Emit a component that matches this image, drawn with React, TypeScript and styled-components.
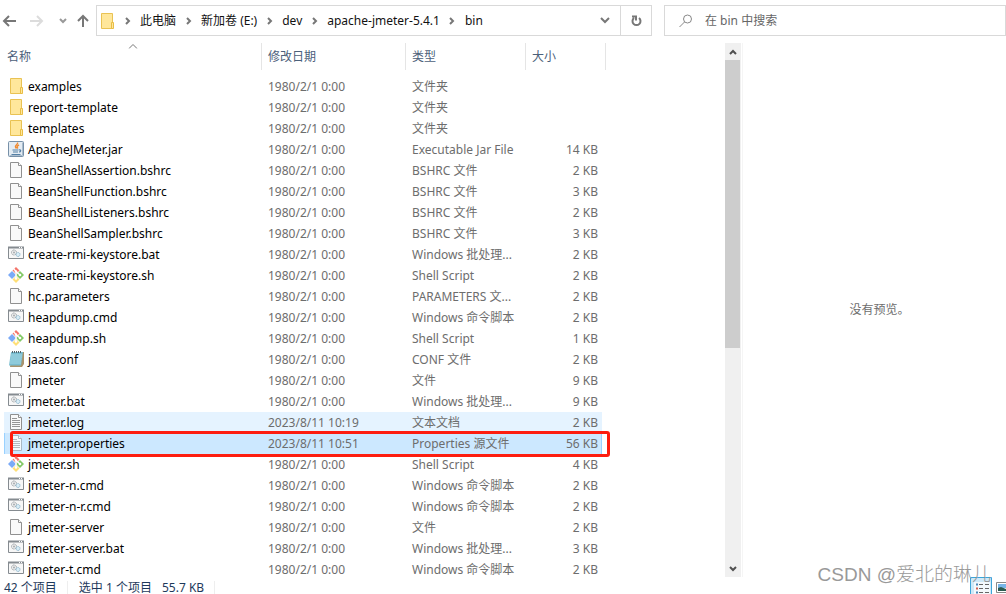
import React from "react";
import styled, { createGlobalStyle, css } from "styled-components";

const Global = createGlobalStyle`
  *, *::before, *::after { box-sizing: border-box; }
  body { margin: 0; background: #fff; }
  body, button, input, table {
    font-family: "Noto Sans", "Noto Sans CJK SC", sans-serif;
    font-size: 12px;
    line-height: 20px;
  }
  svg { display: block; }
`;

const Window = styled.div`
  display: flex;
  flex-direction: column;
  height: 100vh;
  overflow: hidden;
`;

const Toolbar = styled.header`
  display: flex;
  flex: none;
  padding: 5px 0 7px;
`;

const PlainButton = styled.button`
  display: flex;
  align-items: center;
  justify-content: center;
  border: 0;
  padding: 0;
  background: none;
  color: inherit;
`;

const History = styled.nav`
  display: flex;
  flex: none;
  align-items: center;
  width: 96px;
  height: 31px;
`;

const HistoryButton = styled(PlainButton)<{ $width: number }>`
  width: ${(p) => p.$width}px;
  height: 31px;
`;

const Address = styled.nav`
  display: flex;
  flex: 1 1 556px;
  height: 31px;
  border: 1px solid #d9d9d9;
  align-items: center;
  padding-left: 2px;
  min-width: 0;
`;

const Crumb = styled(PlainButton)`
  flex: none;
  color: #111;
`;

const Separator = styled.span`
  display: flex;
  flex: none;
  justify-content: center;
  width: 25px;
`;

const AddressEnd = styled.div`
  display: flex;
  margin-left: auto;
  height: 100%;
`;

const AddressButton = styled(PlainButton)<{ $divided?: boolean }>`
  width: 31px;
  ${(p) => p.$divided && css`border-left: 1px solid #d9d9d9;`}
`;

const Search = styled.label`
  display: flex;
  flex: 1 1 342px;
  align-items: center;
  gap: 12px;
  height: 31px;
  margin-left: 12px;
  padding-left: 14px;
  border: 1px solid #d9d9d9;
  min-width: 0;
`;

const SearchInput = styled.input`
  flex: 1;
  min-width: 0;
  border: 0;
  padding: 0;
  outline: 0;
  color: #666;
  &::placeholder { color: #666; opacity: 1; }
`;

const Content = styled.main`
  display: flex;
  flex: 1;
  min-height: 0;
`;

const ListPane = styled.section`
  flex: 1 1 725px;
  overflow: hidden;
  padding-left: 4px;
`;

const FileTable = styled.table`
  table-layout: fixed;
  width: 602px;
  border-collapse: separate;
  border-spacing: 0;
`;

const HeadCell = styled.th`
  position: relative;
  height: 33px;
  padding: 0 0 6px;
  text-align: left;
  font-weight: 400;
  color: #4c607a;
`;

const HeadLabel = styled.div<{ $first?: boolean }>`
  height: 27px;
  line-height: 27px;
  padding-left: ${(p) => (p.$first ? 3 : 6)}px;
  border-right: 1px solid #e5e5e5;
`;

const SortMark = styled.span`
  position: absolute;
  top: 0;
  left: 50%;
  transform: translateX(-50%);
`;

const Cell = styled.td`
  height: 21px;
  padding: 0 0 0 6px;
  line-height: 20px;
  white-space: nowrap;
  color: #6d6d6d;
`;

const SizeCell = styled(Cell)`
  padding: 0 4px 0 0;
  text-align: right;
`;

const NameCell = styled(Cell)`
  padding: 0 0 0 4px;
  color: #000;
`;

const FileName = styled.div`
  display: flex;
  align-items: flex-start;
  gap: 4px;
  height: 21px;
  line-height: 21px;

  svg { margin-top: 2px; }
`;

const Row = styled.tr<{ $state?: "hover" | "selected" }>`
  position: relative;
  ${(p) => p.$state === "hover" && css`
    ${Cell}:not(:last-child) { background: #e5f3ff; }
  `}
  ${(p) => p.$state === "selected" && css`
    ${Cell}:not(:last-child) { background: #cce8ff; }
    ${NameCell} { box-shadow: inset 1px 0 #99d1ff; }
    ${SizeCell} { box-shadow: inset -1px 0 #99d1ff; }
  `}
`;

const Callout = styled.span`
  position: absolute;
  inset: -2px -4px -3px 6px;
  border: 3px solid #fd1d10;
  border-radius: 3px;
  pointer-events: none;
`;

const ScrollBar = styled.div`
  display: flex;
  flex: none;
  flex-direction: column;
  width: 16px;
  background: #f0f0f0;
`;

const ScrollButton = styled(PlainButton)`
  flex: none;
  height: 17px;
`;

const ScrollTrack = styled.div`
  flex: 1;
`;

const ScrollThumb = styled.div`
  width: 15px;
  height: 57.5%;
  background: #cdcdcd;
`;

const Preview = styled.aside`
  display: flex;
  flex: 1 1 264px;
  align-items: center;
  justify-content: center;
  margin-left: 1px;
  border-left: 1px solid #f5f5f5;
  padding-left: 10px;
  color: #6d6d6d;
`;

const StatusBar = styled.footer`
  display: flex;
  flex: none;
  align-items: center;
  height: 17px;
  padding: 4px 0 0 4px;
  color: #1e395b;
`;

const StatusItem = styled.div`
  display: flex;
  gap: 10px;
  padding-right: 10px;
  margin-right: 11px;
  border-right: 1px solid #eee;
  line-height: 14px;
`;

const ViewModes = styled.div`
  display: flex;
  align-self: flex-start;
  gap: 4px;
  margin: -4px 0 0 auto;
`;

const Watermark = styled.div`
  position: absolute;
  right: 15px;
  bottom: 5px;
  font-family: "Liberation Sans", "Noto Sans CJK SC", sans-serif;
  font-weight: 300;
  font-size: 19px;
  line-height: 28px;
  color: #999;
`;

type Kind = "folder" | "jar" | "blank" | "cmd" | "sh" | "note" | "text" | "props";

const Page = ({ lines, pale }: { lines?: boolean; pale?: boolean }) => (
  <>
    <path d="M2.5 .5h8l3 3v12h-11z" transform="translate(0 0)" fill={pale ? "#f4faff" : "#f9f9f9"} stroke={pale ? "#a9b8c4" : "#909090"} />
    <path d="M10.5 .5v3h3" fill="#fff" stroke={pale ? "#a9b8c4" : "#909090"} />
    {lines && (
      <path d="M4 4.5h5M4 6.5h8M4 8.5h8M4 10.5h8M4 12.5h8" stroke={pale ? "#b4bac0" : "#959595"} />
    )}
  </>
);

const drawings: Record<Kind, React.ReactNode> = {
  folder: (
    <>
      <path d="M2.5 .5h11v15h-11z" fill="#ffe79b" stroke="#e9c253" />
      <path d="M12.5 9.5h2v6h-2z" fill="#ffe79b" stroke="#e9bd45" />
    </>
  ),
  jar: (
    <>
      <rect x=".5" y=".5" width="15" height="15" rx="1" fill="#e4ecf3" stroke="#7790a8" />
      <path d="M1.500 14.500h13v-13" fill="none" stroke="#a9bccd" />
      <path d="M9.500 1.500c1 2-3 3-2 4.500l1 1.500M11 4c-2 1-2.500 2-1 3.500" fill="none" stroke="#f08a30" strokeWidth="1.400" />
      <path d="M4.500 9h6M5 11h5M3.500 13.500h9M11 9c2.500-.5 2 2 0 2" fill="none" stroke="#5580a6" strokeWidth="1.200" />
    </>
  ),
  blank: <Page />,
  text: <Page lines />,
  props: <Page lines pale />,
  cmd: (
    <>
      <path d="M.5 1.500h15v11h-15z" fill="#f7f7f7" stroke="#858b90" />
      <path d="M0 1.500h16" stroke="#858b90" strokeWidth="2" />
      <path d="M11 1.500h1M13 1.500h1" stroke="#fff" />
      <circle cx="6" cy="6.500" r="2.500" fill="#eee" stroke="#999fa4" strokeDasharray="1.200 .5" />
      <circle cx="6" cy="6.500" r="1" fill="#a6abaf" />
      <circle cx="10" cy="8.500" r="2" fill="#d9edf7" stroke="#8cb4cb" strokeDasharray="1.200 .4" />
    </>
  ),
  sh: (
    <>
      <path d="M8 0l3.500 3.500L8 7 4.500 3.500z" fill="#f4756b" />
      <path d="M4 4l4 4-4 4-4-4z" fill="#7baaf7" />
      <path d="M12 4l4 4-4 4-4-4z" fill="#83c967" />
      <path d="M8 9l3.500 3.500L8 16l-3.500-3.500z" fill="#ffdf76" />
      <path d="M5.500 1.500L8 4.500V12M8 4.500l4 3.500" fill="none" stroke="#fff" strokeWidth="1.300" />
      <circle cx="8" cy="4.500" r="1.200" fill="#fff" />
      <circle cx="12" cy="8" r="1.300" fill="#fff" />
      <circle cx="8" cy="11.500" r="1.300" fill="#fff" />
    </>
  ),
  note: (
    <>
      <path d="M4 1h12v12l-2 3H2z" fill="#a8946e" />
      <path d="M3 1h12l-2 13.500H1z" fill="#79bdd0" />
      <path d="M3 4h11M3 6h11M2.500 8h11M2 10h11M2 12h11" stroke="#a6d9e5" />
      <path d="M4.500 0v2M6.500 0v2M8.500 0v2M10.500 0v2M12.500 0v2" stroke="#55666d" />
    </>
  ),
};

const FileIcon = ({ kind }: { kind: Kind }) => (
  <svg width="16" height="16" viewBox="0 0 16 16" aria-hidden="true">
    {drawings[kind]}
  </svg>
);

const Stroke = ({ d, w, h, color = "#777", weight = 2 }: { d: string; w: number; h: number; color?: string; weight?: number }) => (
  <svg width={w} height={h} viewBox={`0 0 ${w} ${h}`} aria-hidden="true">
    <path d={d} fill="none" stroke={color} strokeWidth={weight} />
  </svg>
);

const OLD = "1980/2/1 0:00";
const BAT = "Windows 批处理...";
const CMD = "Windows 命令脚本";

interface Entry {
  kind: Kind;
  name: string;
  date?: string;
  type: string;
  size?: number;
  state?: "hover" | "selected";
}

const files: Entry[] = [
  { kind: "folder", name: "examples", type: "文件夹" },
  { kind: "folder", name: "report-template", type: "文件夹" },
  { kind: "folder", name: "templates", type: "文件夹" },
  { kind: "jar", name: "ApacheJMeter.jar", type: "Executable Jar File", size: 14 },
  { kind: "blank", name: "BeanShellAssertion.bshrc", type: "BSHRC 文件", size: 2 },
  { kind: "blank", name: "BeanShellFunction.bshrc", type: "BSHRC 文件", size: 3 },
  { kind: "blank", name: "BeanShellListeners.bshrc", type: "BSHRC 文件", size: 2 },
  { kind: "blank", name: "BeanShellSampler.bshrc", type: "BSHRC 文件", size: 3 },
  { kind: "cmd", name: "create-rmi-keystore.bat", type: BAT, size: 2 },
  { kind: "sh", name: "create-rmi-keystore.sh", type: "Shell Script", size: 2 },
  { kind: "blank", name: "hc.parameters", type: "PARAMETERS 文...", size: 2 },
  { kind: "cmd", name: "heapdump.cmd", type: CMD, size: 2 },
  { kind: "sh", name: "heapdump.sh", type: "Shell Script", size: 1 },
  { kind: "note", name: "jaas.conf", type: "CONF 文件", size: 2 },
  { kind: "blank", name: "jmeter", type: "文件", size: 9 },
  { kind: "cmd", name: "jmeter.bat", type: BAT, size: 9 },
  { kind: "text", name: "jmeter.log", date: "2023/8/11 10:19", type: "文本文档", size: 2, state: "hover" },
  { kind: "props", name: "jmeter.properties", date: "2023/8/11 10:51", type: "Properties 源文件", size: 56, state: "selected" },
  { kind: "sh", name: "jmeter.sh", type: "Shell Script", size: 4 },
  { kind: "cmd", name: "jmeter-n.cmd", type: CMD, size: 2 },
  { kind: "cmd", name: "jmeter-n-r.cmd", type: CMD, size: 2 },
  { kind: "blank", name: "jmeter-server", type: "文件", size: 2 },
  { kind: "cmd", name: "jmeter-server.bat", type: BAT, size: 3 },
  { kind: "cmd", name: "jmeter-t.cmd", type: CMD, size: 2 },
];

const crumbs = ["此电脑", "新加卷 (E:)", "dev", "apache-jmeter-5.4.1", "bin"];

export default function App() {
  return (
    <Window>
      <Global />
      <Toolbar>
        <History aria-label="导航">
          <HistoryButton $width={18} aria-label="后退">
            <Stroke w={14} h={12} d="M7 1L2 6l5 5M2 6h12" />
          </HistoryButton>
          <HistoryButton $width={38} aria-label="前进">
            <Stroke w={14} h={12} d="M7 1l5 5-5 5M12 6H0" color="#dcdcdc" />
          </HistoryButton>
          <HistoryButton $width={14} aria-label="最近浏览的位置">
            <Stroke w={8} h={6} d="M1 1l3 3 3-3" color="#999" />
          </HistoryButton>
          <HistoryButton $width={26} aria-label="向上">
            <Stroke w={12} h={13} d="M1 7l5-5 5 5M6 2v11" />
          </HistoryButton>
        </History>
        <Address aria-label="地址">
          <FileIcon kind="folder" />
          {crumbs.map((crumb) => (
            <React.Fragment key={crumb}>
              <Separator>
                <Stroke w={6} h={8} d="M1 1l3 3-3 3" />
              </Separator>
              <Crumb>{crumb}</Crumb>
            </React.Fragment>
          ))}
          <AddressEnd>
            <AddressButton aria-label="以前的位置">
              <Stroke w={10} h={7} d="M1 1l4 4 4-4" />
            </AddressButton>
            <AddressButton $divided aria-label="刷新">
              <Stroke w={11} h={12} d="M8 3a4 4 0 1 1-5 0M1 1.500h4v4" weight={2} />
            </AddressButton>
          </AddressEnd>
        </Address>
        <Search>
          <svg width="14" height="14" viewBox="0 0 14 14" aria-hidden="true">
            <circle cx="8.500" cy="5" r="4" fill="none" stroke="#888" />
            <path d="M5.500 8L.5 13" stroke="#888" />
          </svg>
          <SearchInput placeholder="在 bin 中搜索" aria-label="搜索" />
        </Search>
      </Toolbar>

      <Content>
        <ListPane>
          <FileTable>
            <colgroup>
              <col style={{ width: 258 }} />
              <col style={{ width: 144 }} />
              <col style={{ width: 120 }} />
              <col style={{ width: 76 }} />
              <col style={{ width: 4 }} />
            </colgroup>
            <thead>
              <tr>
                <HeadCell>
                  <SortMark>
                    <Stroke w={9} h={6} d="M.5 5.500l4-4 4 4" weight={1} />
                  </SortMark>
                  <HeadLabel $first>名称</HeadLabel>
                </HeadCell>
                <HeadCell><HeadLabel>修改日期</HeadLabel></HeadCell>
                <HeadCell><HeadLabel>类型</HeadLabel></HeadCell>
                <HeadCell colSpan={2}><HeadLabel>大小</HeadLabel></HeadCell>
              </tr>
            </thead>
            <tbody>
              {files.map((file) => (
                <Row key={file.name} $state={file.state}>
                  <NameCell>
                    <FileName>
                      <FileIcon kind={file.kind} />
                      {file.name}
                    </FileName>
                    {file.state === "selected" && <Callout />}
                  </NameCell>
                  <Cell>{file.date ?? OLD}</Cell>
                  <Cell>{file.type}</Cell>
                  <SizeCell>{file.size && `${file.size} KB`}</SizeCell>
                  <Cell />
                </Row>
              ))}
            </tbody>
          </FileTable>
        </ListPane>
        <ScrollBar>
          <ScrollButton aria-label="向上滚动">
            <Stroke w={8} h={6} d="M1 5l3-3 3 3" color="#505050" />
          </ScrollButton>
          <ScrollTrack>
            <ScrollThumb />
          </ScrollTrack>
          <ScrollButton aria-label="向下滚动">
            <Stroke w={8} h={6} d="M1 1l3 3 3-3" color="#505050" />
          </ScrollButton>
        </ScrollBar>
        <Preview>没有预览。</Preview>
      </Content>

      <StatusBar>
        <StatusItem>42 个项目</StatusItem>
        <StatusItem>
          <span>选中 1 个项目</span>
          <span>55.7 KB</span>
        </StatusItem>
        <ViewModes>
          <PlainButton aria-label="详细信息">
            <svg width="22" height="17" viewBox="0 0 22 17" aria-hidden="true">
              <path d="M.5 17V.5h21V17" fill="#cfe9f8" stroke="#3da5d9" />
              <path d="M4 5h16v12H4z" fill="#f4f9fc" />
              <path d="M9 7.500h4M15 7.500h4M9 11.500h4M15 11.500h4M9 15.500h4M15 15.500h4" stroke="#666" />
              <path d="M6 7.500h2M6 15.500h2" stroke="#4a86b8" strokeWidth="2" />
              <path d="M6 11.500h2" stroke="#d26050" strokeWidth="2" />
            </svg>
          </PlainButton>
          <PlainButton aria-label="大图标">
            <svg width="10" height="17" viewBox="0 0 10 17" aria-hidden="true">
              <path d="M10 5.500H.5v10H10" fill="#fff" stroke="#888" />
              <path d="M2 7h8v4H2z" fill="#78b5e7" />
              <path d="M2 11l3-1 5 2v2H2z" fill="#2b5b50" />
            </svg>
          </PlainButton>
        </ViewModes>
      </StatusBar>
      <Watermark>CSDN @爱北的琳儿</Watermark>
    </Window>
  );
}
